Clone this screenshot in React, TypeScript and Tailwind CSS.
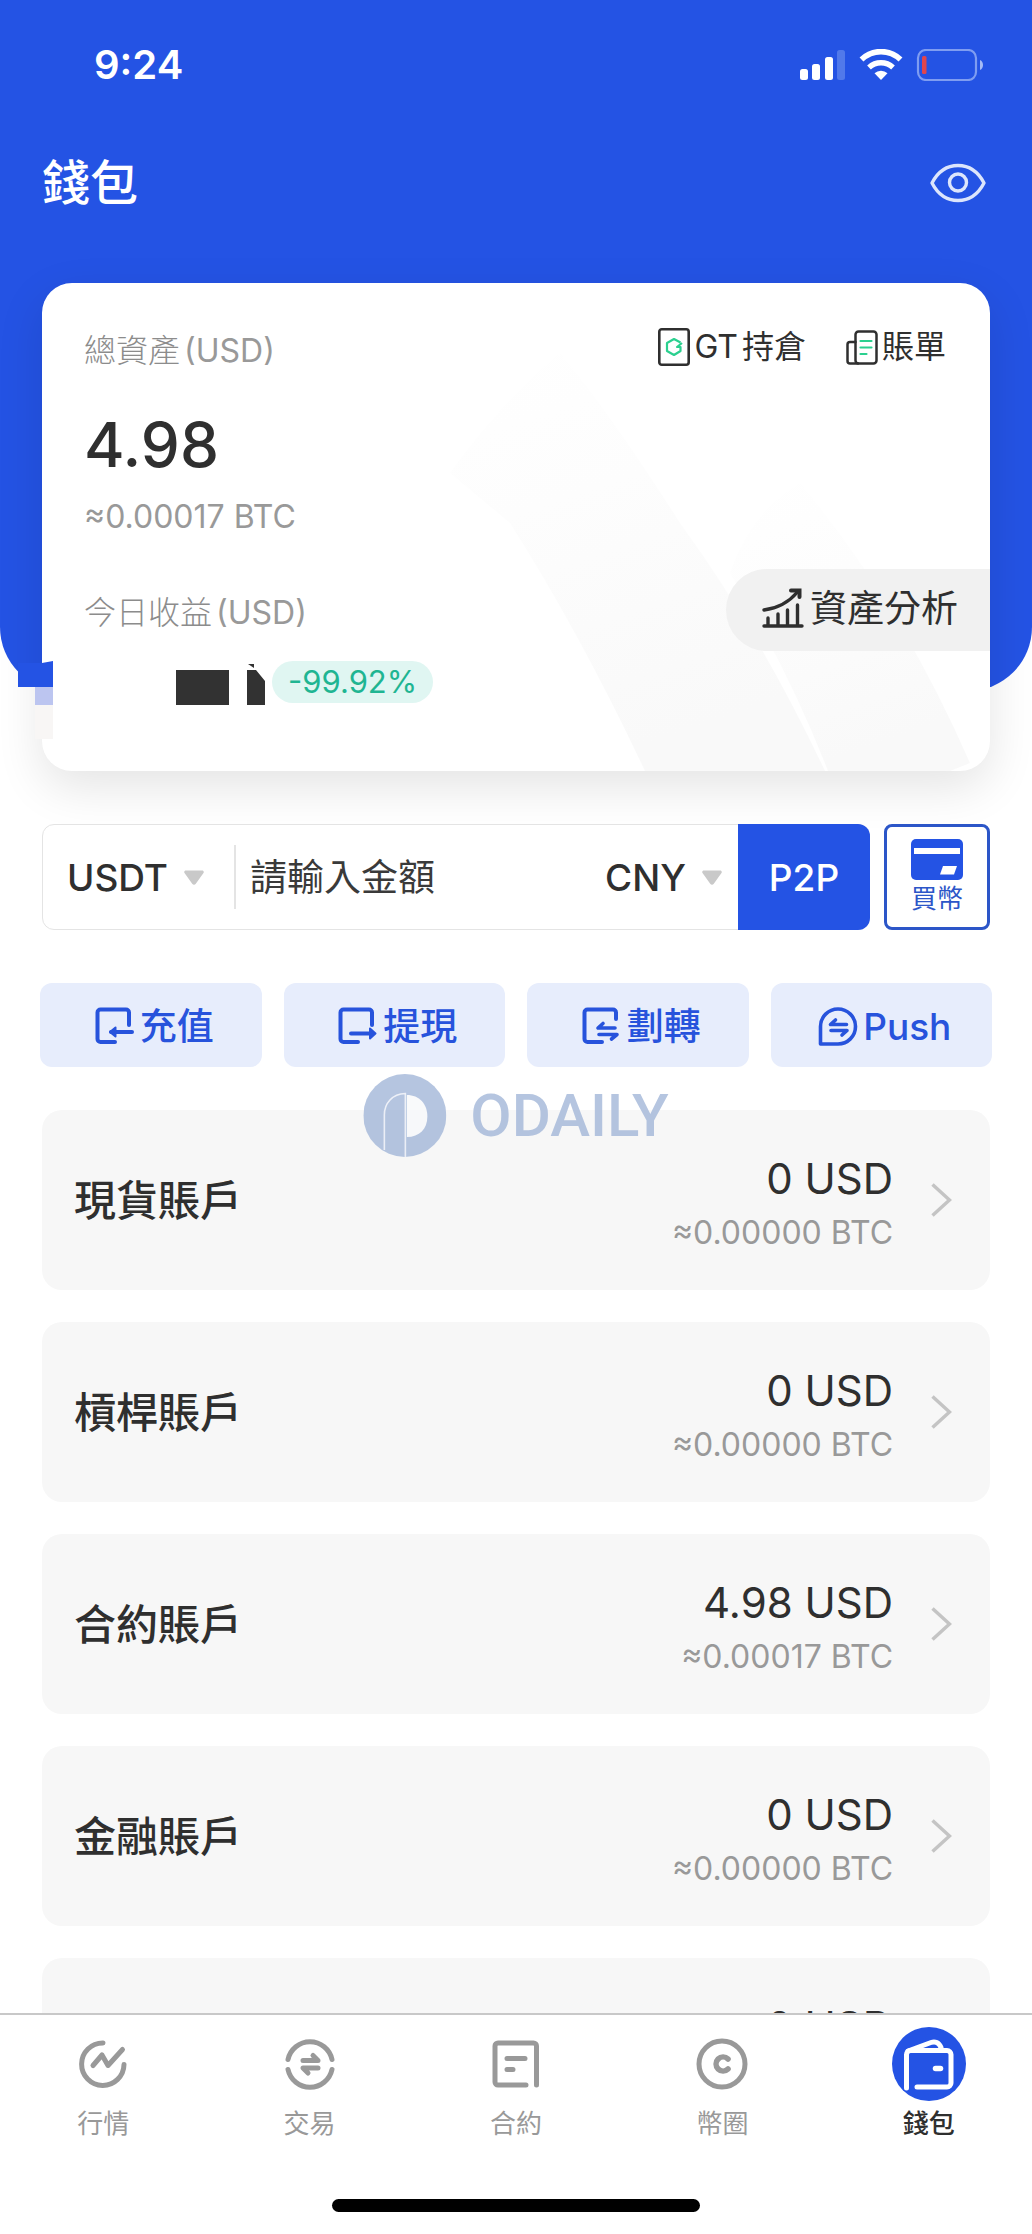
import type { ReactNode } from "react";

const FONT = "font-[Inter,'Noto_Sans_CJK_TC',sans-serif]";

function StatusIcons() {
  return (
    <svg className="h-8 w-[184px]" viewBox="0 0 184 32" fill="none" aria-hidden="true">
      <rect x="0" y="20" width="8" height="11" rx="2.5" fill="#fff" />
      <rect x="12" y="15" width="8" height="16" rx="2.5" fill="#fff" />
      <rect x="25" y="8" width="8" height="23" rx="2.5" fill="#fff" />
      <rect x="37" y="1" width="8" height="30" rx="2.5" fill="#5179ea" />
      <path d="M61.500 10.500a28 28 0 0 1 39 0" stroke="#fff" strokeWidth="5.600" />
      <path d="M69 18.500a17.500 17.500 0 0 1 24 0" stroke="#fff" strokeWidth="5.400" />
      <path d="M81 31l-6.500-6.800a9.500 9.500 0 0 1 13 0Z" fill="#fff" />
      <rect x="118" y="1" width="58" height="30" rx="8" stroke="#7f9df1" strokeWidth="2.200" />
      <rect x="122" y="7" width="4.500" height="18" rx="1.500" fill="#e0454d" />
      <path d="M180 11c4 1.500 4 8.500 0 10Z" fill="#a5baf5" />
    </svg>
  );
}

function EyeIcon() {
  return (
    <svg className="h-10 w-14" viewBox="0 0 56 40" fill="none" stroke="#dce5fc" strokeWidth="3.400" aria-hidden="true">
      <path d="M2 20C8 8.500 17 2.500 28 2.500S48 8.500 54 20C48 31.500 39 37.500 28 37.500S8 31.500 2 20Z" strokeLinejoin="round" />
      <circle cx="28" cy="19.500" r="8.500" />
    </svg>
  );
}

function HoldingIcon() {
  return (
    <svg className="h-[38px] w-8" viewBox="0 0 32 38" fill="none" aria-hidden="true">
      <rect x="1.300" y="1.300" width="29.400" height="35.400" rx="2.500" stroke="#2f2f2f" strokeWidth="2.600" />
      <path d="M22.500 14.500 16 11l-7 4v8l7 4 6.500-4v-4H19l5-4" stroke="#2bd08f" strokeWidth="2.200" strokeLinejoin="round" />
    </svg>
  );
}

function BillIcon() {
  return (
    <svg className="h-[35px] w-8" viewBox="0 0 32 35" fill="none" strokeLinecap="round" strokeWidth="2.500" aria-hidden="true">
      <rect x="9.500" y="1.500" width="21" height="32" rx="3" stroke="#2f2f2f" />
      <path d="M9.500 12H4a2.500 2.500 0 0 0-2.500 2.500V31A2.500 2.500 0 0 0 4 33.500h8" stroke="#2f2f2f" />
      <path d="M14.500 11h11M14.500 17.500h11M14.500 24h6" stroke="#2bd08f" strokeWidth="2.200" />
    </svg>
  );
}

function AnalysisIcon() {
  return (
    <svg className="h-10 w-[42px]" viewBox="0 0 42 40" fill="none" stroke="#2f2f2f" strokeWidth="3.400" strokeLinecap="round" aria-hidden="true">
      <path d="M2 22C17 20 27 14 35 4.500" />
      <path d="M29 2.500h8.500V9" strokeLinejoin="miter" strokeWidth="4" />
      <path d="M2 38h38M6 30v7M16 26v11M25.500 22v15M35.500 17v20" />
    </svg>
  );
}

function CardPattern() {
  return (
    <svg className="absolute right-0 bottom-0 h-full w-[540px]" viewBox="0 0 540 488" preserveAspectRatio="xMaxYMax slice" aria-hidden="true">
      <defs>
        <linearGradient id="band" x1="0" y1="0" x2="0.300" y2="1">
          <stop offset="0" stopColor="#fff" />
          <stop offset="0.400" stopColor="#fdfdfd" />
          <stop offset="1" stopColor="#f9f9f9" />
        </linearGradient>
      </defs>
      <path d="M0 190Q50 120 110 70Q160 130 230 240Q310 350 375 488H195Q130 350 60 240Z" fill="url(#band)" />
      <path d="M280 290Q300 230 350 200Q450 320 520 480L500 488H378Q340 390 280 290Z" fill="url(#band)" />
    </svg>
  );
}

function Caret() {
  return (
    <svg className="h-4 w-5 shrink-0" viewBox="0 0 20 16" fill="#c9c9c9" aria-hidden="true">
      <path d="M2 .5h16c1.700 0 2.300 1.500 1.300 2.800l-7.500 10.500c-1 1.400-2.600 1.400-3.600 0L.7 3.300C-.3 2 .3.500 2 .5Z" />
    </svg>
  );
}

function BankCardIcon() {
  return (
    <svg className="h-[41px] w-[52px]" viewBox="0 0 52 41" aria-hidden="true">
      <rect width="52" height="41" rx="5" fill="#2453e4" />
      <path d="M3 9h46v6H3z" fill="#fff" />
      <path d="M32 27h14l-3 8.500H29Z" fill="#fff" />
    </svg>
  );
}

const frame = "M33 17V4.500a3 3 0 0 0-3-3H4.500a3 3 0 0 0-3 3V31a3 3 0 0 0 3 3H19";

function ActionIcon({ children }: { children: ReactNode }) {
  return (
    <svg className="h-9 w-[38px] shrink-0 overflow-visible" viewBox="0 0 38 36" fill="none" stroke="#2753dc" strokeWidth="4" strokeLinecap="round" strokeLinejoin="round" aria-hidden="true">
      {children}
    </svg>
  );
}

const actions = [
  {
    label: "充值",
    icon: (
      <ActionIcon>
        <path d={frame} />
        <path d="M36 24H15" />
        <path d="M19.500 19.500v9L14 24Z" fill="#2753dc" strokeWidth="2" />
      </ActionIcon>
    ),
  },
  {
    label: "提現",
    icon: (
      <ActionIcon>
        <path d={frame} />
        <path d="M12 25.500h20" />
        <path d="M31 20.500v10l5.500-5Z" fill="#2753dc" strokeWidth="2" />
      </ActionIcon>
    ),
  },
  {
    label: "劃轉",
    icon: (
      <ActionIcon>
        <path d="M33 11V4.500a3 3 0 0 0-3-3H4.500a3 3 0 0 0-3 3V31a3 3 0 0 0 3 3H19" />
        <path d="M20 15.500l-5 4.500h17M16 26.500h18l-5.500 4.500" strokeWidth="3.600" />
      </ActionIcon>
    ),
  },
  {
    label: "Push",
    icon: (
      <ActionIcon>
        <path d="M1.500 36V18.500a17.500 17.500 0 1 1 17.500 17.500Z" strokeWidth="3.600" />
        <path d="M16.500 12l-5 4.500h16M12 22.500h16l-5 4.500" strokeWidth="3.600" />
      </ActionIcon>
    ),
  },
];

const accounts = [
  { id: "spot", name: "現貨賬戶", usd: "0 USD", btc: "≈0.00000 BTC" },
  { id: "margin", name: "槓桿賬戶", usd: "0 USD", btc: "≈0.00000 BTC" },
  { id: "contract", name: "合約賬戶", usd: "4.98 USD", btc: "≈0.00017 BTC" },
  { id: "finance", name: "金融賬戶", usd: "0 USD", btc: "≈0.00000 BTC" },
  { id: "other", name: "", usd: "0 USD", btc: "" },
];

function TabIcon({ children }: { children: ReactNode }) {
  return (
    <svg className="size-[52px]" viewBox="0 0 52 52" fill="none" stroke="#999" strokeWidth="5" strokeLinecap="round" strokeLinejoin="round" aria-hidden="true">
      {children}
    </svg>
  );
}

const tabs = [
  {
    label: "行情",
    icon: (
      <TabIcon>
        <path d="M26 5A21.200 21.200 0 1 0 47 26.500" />
        <path d="M16 27.500l9-10.500 6 10.500L45.500 11.500" />
      </TabIcon>
    ),
  },
  {
    label: "交易",
    icon: (
      <TabIcon>
        <path d="M4 21.500a22.500 22.500 0 0 1 44 0M4 31.500a22.500 22.500 0 0 0 44 0" />
        <path d="M19 22.500h15l-5-5M34 30H19l5 5" strokeWidth="5" />
      </TabIcon>
    ),
  },
  {
    label: "合約",
    icon: (
      <TabIcon>
        <path d="M46.500 47V8a3 3 0 0 0-3-3H8a3 3 0 0 0-3 3v36a3 3 0 0 0 3 3h28" />
        <path d="M17 20.500h18M17 31.500h6" />
      </TabIcon>
    ),
  },
  {
    label: "幣圈",
    icon: (
      <TabIcon>
        <circle cx="26" cy="26" r="23" />
        <path d="M32 21a7 7 0 1 0 0 10" strokeWidth="5.600" />
      </TabIcon>
    ),
  },
];

function WalletTabIcon() {
  return (
    <svg className="size-[74px]" viewBox="0 0 74 74" fill="none" stroke="#fff" strokeWidth="5" strokeLinecap="round" strokeLinejoin="round" aria-hidden="true">
      <circle cx="37" cy="37" r="37" fill="#2453e4" stroke="none" />
      <path d="M14.500 61V27.500a4 4 0 0 1 4-4H55a4 4 0 0 1 4 4V56a4 4 0 0 1-4 4H25" />
      <path d="M16 24L39 15.500c4-1.500 8 0 10 5" />
      <path d="M43.500 41.500h5" strokeWidth="5.500" />
    </svg>
  );
}

function Redaction() {
  return (
    <svg className="h-[42px] w-[90px] overflow-visible" viewBox="0 0 90 42" fill="#323232" aria-hidden="true">
      <path d="M0 9h53v35H0zM71 9h9l9 11v24H71zM72 3h6v4z" />
    </svg>
  );
}

function Watermark() {
  return (
    <div className="pointer-events-none absolute -top-9 left-1/2 flex -translate-x-1/2 items-center gap-6 opacity-80" aria-hidden="true">
      <svg className="size-[83px]" viewBox="0 0 83 83" fill="none">
        <circle cx="41.500" cy="41.500" r="41.500" fill="#a3b7d9" />
        <path d="M43.500 21C56 21 64 30 64 42.500S56 63 43.500 63Z" fill="#f8f9fb" />
        <path d="M21 76V41C21 29 29 20 42 19.500V83" stroke="#e9edf6" strokeWidth="1.600" />
      </svg>
      <span className="font-[Roboto,sans-serif] text-[60px] leading-none font-medium text-[#a3b7d9]">ODAILY</span>
    </div>
  );
}

export default function App() {
  return (
    <div className={`flex h-screen flex-col bg-white text-[#2f2f2f] ${FONT}`} lang="zh-Hant">
      <main className="relative min-h-0 flex-1 overflow-y-auto [scrollbar-width:none]">
        <header className="relative flex flex-col rounded-b-[64px] bg-[#2453e4] px-[42px]">
          <div className="flex h-[130px] items-center justify-between pl-[52px]">
            <span className="text-[40px] leading-none font-semibold text-white">9:24</span>
            <div className="pr-1.5">
              <StatusIcons />
            </div>
          </div>
          <div className="flex h-[105px] items-center justify-between">
            <h1 className="text-[48px] leading-none font-medium text-white">錢包</h1>
            <button type="button" aria-label="顯示資產" className="mr-1">
              <EyeIcon />
            </button>
          </div>

          <section className="relative mt-12 -mb-20 rounded-[30px] bg-white px-[42px] pt-11 pb-17 shadow-[0_16px_48px_rgba(0,0,0,0.11)]">
            <div className="absolute inset-0 overflow-hidden rounded-[30px]">
              <CardPattern />
            </div>
            <div className="relative">
              <div className="flex h-12 items-center justify-between">
                <h2 className="flex gap-1 text-[32px] leading-none text-[#999]">
                  <span className="font-light text-[#8c8c8c]">總資產</span>
                  <span>(USD)</span>
                </h2>
                <div className="flex h-10 items-center gap-10 self-start pr-0.5 text-[32px] leading-none">
                  <button type="button" className="flex items-center gap-1">
                    <HoldingIcon />
                    <span>GT</span>
                    <span>持倉</span>
                  </button>
                  <button type="button" className="flex items-center gap-1">
                    <BillIcon />
                    賬單
                  </button>
                </div>
              </div>
              <p className="mt-9 text-[62px] leading-[68px] font-medium">4.98</p>
              <p className="mt-3.5 text-[32px] leading-12 text-[#999]">≈0.00017 BTC</p>
              <div className="-mr-[42px] mt-7 flex items-center justify-between">
                <h2 className="flex gap-1 pt-1.5 text-[32px] leading-none text-[#999]">
                  <span className="font-light text-[#8c8c8c]">今日收益</span>
                  <span>(USD)</span>
                </h2>
                <button type="button" className="flex h-[82px] items-center gap-1.5 rounded-l-full bg-[#f1f1f1] pr-8 pb-1 pl-9 text-[37px] leading-none">
                  <AnalysisIcon />
                  資產分析
                </button>
              </div>
              <div className="mt-2.5 flex items-center gap-1.5 pl-[92px]">
                <Redaction />
                <span className="rounded-full bg-[#e0f6f2] px-4 text-[31px] leading-[42px] text-[#1fb592]">-99.92%</span>
              </div>
            </div>
            <svg className="absolute -left-6 bottom-8 h-[78px] w-[35px]" viewBox="0 0 35 78" aria-hidden="true">
              <path d="M24 2L35 0V26H0V2Z" fill="#2453e4" />
              <path d="M17 26H35V44H17Z" fill="#bcc5f0" />
              <path d="M17 44H35V78H17Z" fill="#f8f6f5" />
            </svg>
          </section>
        </header>

        <div className="relative mt-[133px] flex gap-3.5 px-[42px]">
          <form className="flex h-[106px] min-w-0 flex-1 items-stretch rounded-xl border border-[#e4e4e4] bg-white text-[37px]" onSubmit={(e) => e.preventDefault()}>
            <button type="button" aria-label="選擇幣種" className="flex items-center gap-4 pt-0.5 pl-6 font-medium">
              USDT
              <Caret />
            </button>
            <span className="my-auto ml-[30px] h-16 w-0.5 bg-[#e4e4e4]" />
            <input
              type="text"
              aria-label="請輸入金額"
              placeholder="請輸入金額"
              className="min-w-0 flex-1 bg-transparent pt-0.5 pl-3.5 outline-none placeholder:text-[#3a3a3a] placeholder:opacity-100"
            />
            <button type="button" aria-label="選擇法幣" className="flex items-center gap-4 pt-0.5 pr-4 font-medium">
              CNY
              <Caret />
            </button>
            <button type="submit" className="-my-px -mr-px w-[132px] rounded-r-xl bg-[#2453e4] pt-0.5 font-medium text-white">
              P2P
            </button>
          </form>
          <button type="button" className="flex w-[106px] flex-col items-center justify-center gap-1.5 rounded-lg border-[3px] border-[#2c56c8] bg-white pb-1 text-[26px] leading-none text-[#2c56c8]">
            <BankCardIcon />
            買幣
          </button>
        </div>

        <div className="mt-[53px] grid grid-cols-4 gap-[22px] px-10">
          {actions.map((a) => (
            <button key={a.label} type="button" className="flex h-[84px] items-center justify-center gap-1.5 rounded-xl bg-[#e7edfc] pt-0.5 pl-2 text-[37px] leading-none font-medium text-[#2753dc]">
              {a.icon}
              {a.label}
            </button>
          ))}
        </div>

        <div className="relative mt-[43px]">
          <ul className="flex flex-col gap-8 px-[42px]">
            {accounts.map((a) => (
              <li key={a.id}>
                <button type="button" className="flex h-[180px] w-full items-center justify-between rounded-[20px] bg-[#f7f7f7] pr-[38px] pl-8">
                  <span className="text-[42px] font-medium">{a.name}</span>
                  <span className="flex items-center gap-[38px]">
                    <span className="flex flex-col items-end pt-2.5">
                      <span className="text-[42px] leading-14">{a.usd}</span>
                      <span className="h-[52px] text-[32px] leading-[52px] text-[#999]">{a.btc}</span>
                    </span>
                    <svg className="h-[34px] w-[21px]" viewBox="0 0 21 34" fill="none" stroke="#c4c4c4" strokeWidth="3.500" aria-hidden="true">
                      <path d="M1.500 1.500L18.500 17L1.500 32.500" />
                    </svg>
                  </span>
                </button>
              </li>
            ))}
          </ul>
          <Watermark />
        </div>
      </main>

      <nav className="shrink-0 border-t-2 border-[#c8c8c8] bg-white pb-[22px]" aria-label="主選單">
        <ul className="grid grid-cols-5">
          {tabs.map((t) => (
            <li key={t.label}>
              <a href="#" className="flex flex-col items-center text-[26px] leading-none text-[#999]">
                <span className="mt-3 mb-2.5 flex h-[74px] items-center">{t.icon}</span>
                {t.label}
              </a>
            </li>
          ))}
          <li>
            <a href="#" aria-current="page" className="flex flex-col items-center text-[26px] leading-none font-medium">
              <span className="mt-3 mb-2.5 flex h-[74px] items-center">
                <WalletTabIcon />
              </span>
              錢包
            </a>
          </li>
        </ul>
        <div className="mx-auto mt-[62px] h-[13px] w-[368px] rounded-full bg-black" />
      </nav>
    </div>
  );
}
